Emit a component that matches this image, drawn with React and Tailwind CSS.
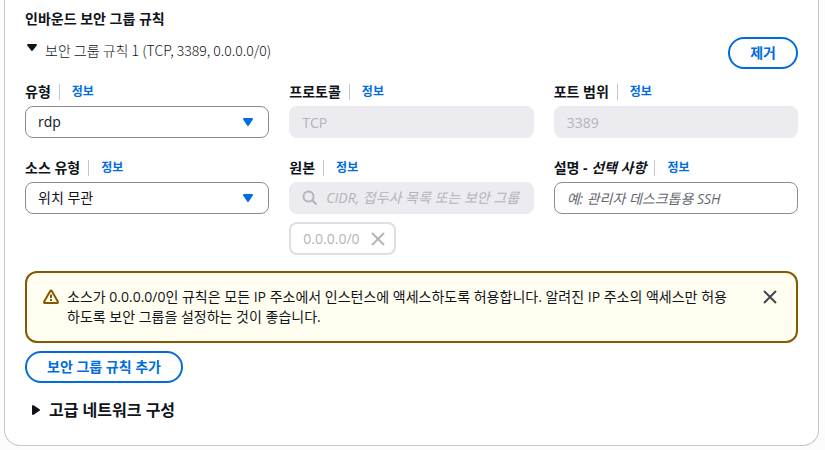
import React from "react";

const InfoLink = () => (
  <a
    href="#info"
    className="ml-2 border-l border-[#c6c6cd] pl-3 text-xs leading-4 font-bold text-[#006ce0]"
  >
    정보
  </a>
);

const Field = ({ id, label, optional, children }) => (
  <div className="min-w-0">
    <div className="mb-1 flex h-5 items-center">
      <label htmlFor={id} className="font-bold">
        {label}
        {optional && <i> - {optional}</i>}
      </label>
      <InfoLink />
    </div>
    {children}
  </div>
);

const Select = ({ id, value }) => (
  <div className="relative">
    <select
      id={id}
      defaultValue={value}
      className="block h-8 w-full appearance-none rounded-lg border border-[#8c8c94] bg-white px-3 text-[#0f141a]"
    >
      <option>{value}</option>
    </select>
    <svg
      viewBox="0 0 16 16"
      className="pointer-events-none absolute top-2 right-3 size-4 fill-[#006ce0] stroke-[#006ce0]"
      strokeWidth="2"
      strokeLinejoin="round"
    >
      <path d="M3 5h8l-4 6z" />
    </svg>
  </div>
);

const CloseIcon = () => (
  <svg
    viewBox="0 0 16 16"
    className="size-4 fill-none stroke-current"
    strokeWidth="2"
  >
    <path d="m2 2 12 12M14 2 2 14" />
  </svg>
);

const App = () => {
  return (
    <div className="min-h-screen bg-[#fcfcfd] pr-1.5 pb-1 pl-1 font-['Open_Sans','Noto_Sans_CJK_KR',sans-serif] text-sm leading-5 text-[#0f141a]">
      <main className="rounded-b-2xl border-x border-b border-[#c6c6cd] bg-white px-5 pt-[9px] pb-[25px]">
        <h2 className="font-bold">인바운드 보안 그룹 규칙</h2>

        <div className="mt-2 flex items-start justify-between">
          <button
            type="button"
            className="flex items-start pt-[3px] font-['Noto_Sans_CJK_KR',sans-serif] font-light"
          >
            <svg
              viewBox="0 0 16 16"
              className="mr-1 size-4 fill-[#0f141a] stroke-[#0f141a]"
              strokeWidth="2"
              strokeLinejoin="round"
            >
              <path d="M3 5h8l-4 5z" />
            </svg>
            보안 그룹 규칙 1 (TCP, 3389, 0.0.0.0/0)
          </button>
          <button
            type="button"
            className="h-8 rounded-full border-2 border-[#006ce0] px-5 leading-none font-bold text-[#006ce0]"
          >
            제거
          </button>
        </div>

        <div className="mt-[13px] grid grid-cols-3 gap-5">
          <Field id="type" label="유형">
            <Select id="type" value="rdp" />
          </Field>
          <Field id="protocol" label="프로토콜">
            <input
              id="protocol"
              disabled
              defaultValue="TCP"
              className="block h-8 w-full rounded-lg bg-[#ebebf0] px-[13px] text-[#b4b4bb]"
            />
          </Field>
          <Field id="port" label="포트 범위">
            <input
              id="port"
              disabled
              defaultValue="3389"
              className="block h-8 w-full rounded-lg bg-[#ebebf0] px-[13px] text-[#b4b4bb]"
            />
          </Field>
          <Field id="source-type" label="소스 유형">
            <Select id="source-type" value="위치 무관" />
          </Field>
          <Field id="source" label="원본">
            <div className="flex h-8 items-center gap-2 rounded-lg bg-[#ebebf0] px-[13px] text-[#b4b4bb]">
              <svg
                viewBox="0 0 16 16"
                className="size-4 shrink-0 fill-none stroke-current"
                strokeWidth="2"
              >
                <circle cx="6.5" cy="6.5" r="5" />
                <path d="m10 10 4.5 4.5" />
              </svg>
              <input
                id="source"
                disabled
                placeholder="CIDR, 접두사 목록 또는 보안 그룹 추가"
                className="min-w-0 flex-1 placeholder:text-[#b4b4bb] placeholder:italic"
              />
            </div>
            <div className="mt-2 flex h-[33px] w-fit items-center gap-2.5 rounded-lg border-2 border-[#dedee3] pr-2 pl-3 text-[#b4b4bb]">
              0.0.0.0/0
              <button type="button" disabled aria-label="0.0.0.0/0 제거">
                <CloseIcon />
              </button>
            </div>
          </Field>
          <Field id="description" label="설명" optional="선택 사항">
            <input
              id="description"
              placeholder="예: 관리자 데스크톱용 SSH"
              className="block h-8 w-full rounded-lg border border-[#8c8c94] px-3 placeholder:text-[#656871] placeholder:italic"
            />
          </Field>
        </div>

        <div
          role="alert"
          className="mt-4 flex items-start rounded-xl border-2 border-[#855900] bg-[#fffef0] px-4 py-3.5"
        >
          <svg
            viewBox="0 0 16 16"
            className="mt-0.5 mr-2 size-4 shrink-0 fill-none stroke-[#855900]"
            strokeWidth="2"
            strokeLinejoin="round"
          >
            <path d="M7.1 2.2 1.2 12.6Q.8 14 2 14h12q1.200 0 .8-1.400L8.900 2.200Q8 1 7.100 2.200z" />
            <path d="M8 5.500v3.500M8 10v2" />
          </svg>
          <p className="flex-1">
            소스가 0.0.0.0/0인 규칙은 모든 IP 주소에서 인스턴스에 액세스하도록
            허용합니다. 알려진 IP 주소의 액세스만 허용하도록 보안 그룹을
            설정하는 것이 좋습니다.
          </p>
          <button
            type="button"
            aria-label="닫기"
            className="mt-0.5 mr-0.5 ml-8 text-[#424650]"
          >
            <CloseIcon />
          </button>
        </div>

        <button
          type="button"
          className="mt-2 block h-8 rounded-full border-2 border-[#006ce0] px-5 leading-none font-bold text-[#006ce0]"
        >
          보안 그룹 규칙 추가
        </button>

        <button
          type="button"
          className="mt-[17px] ml-1 flex items-center gap-1 text-base leading-5 font-bold"
        >
          <svg
            viewBox="0 0 16 16"
            className="size-4 fill-[#0f141a] stroke-[#0f141a]"
            strokeWidth="2"
            strokeLinejoin="round"
          >
            <path d="M4 4v8l6-4z" />
          </svg>
          고급 네트워크 구성
        </button>
      </main>
    </div>
  );
};

export default App;
